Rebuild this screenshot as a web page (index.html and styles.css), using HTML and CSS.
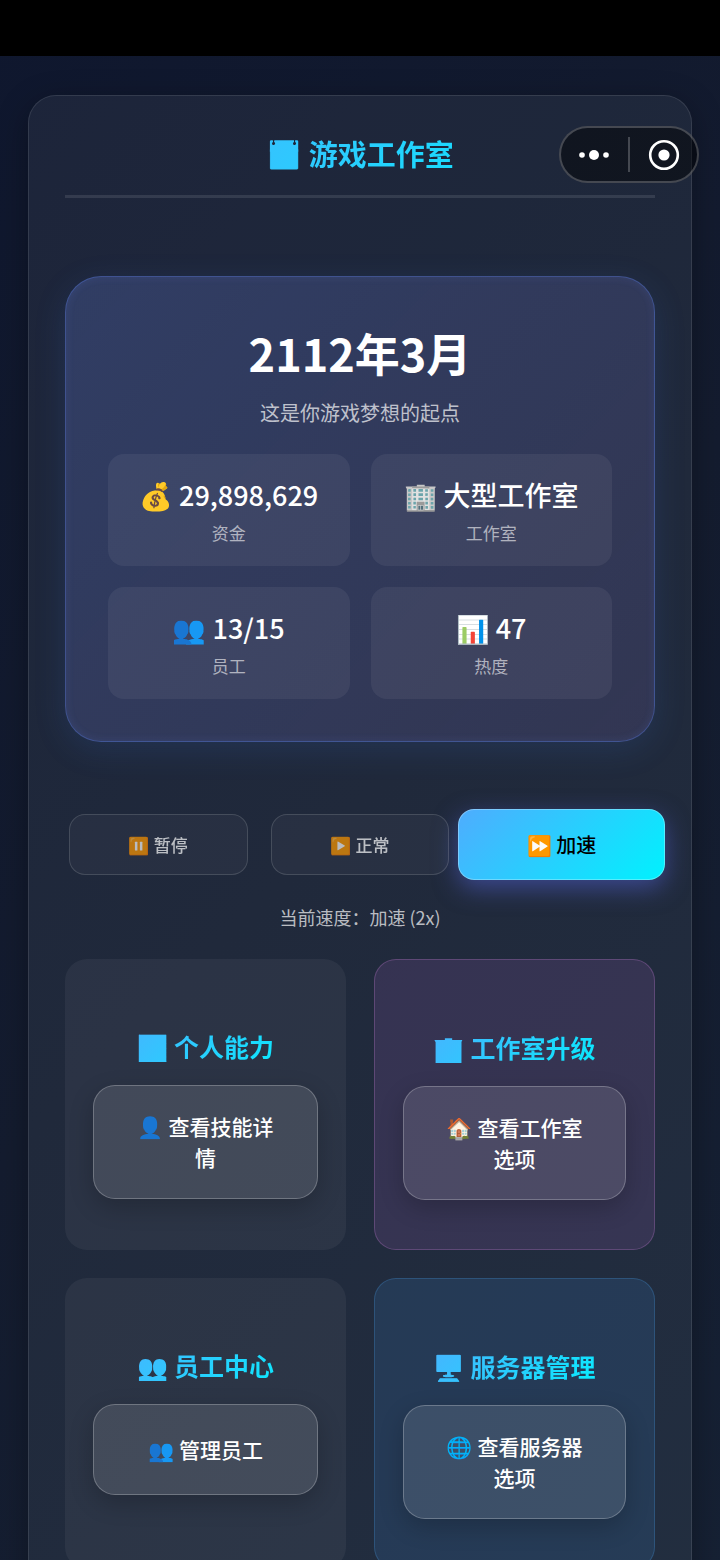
FILE: index.html
```html
<!DOCTYPE html>
<html lang="zh-CN">
<head>
  <meta charset="UTF-8">
  <meta name="viewport" content="width=device-width, initial-scale=1.0">
  <title>游戏工作室</title>
  <link rel="stylesheet" href="styles.css">
</head>

<body>

  <div class="status-bar"></div>

  <div class="capsule">
    <button class="capsule-btn" aria-label="更多">
      <svg width="32" height="12" viewBox="0 0 32 12">
        <circle cx="3" cy="6" r="2.8"/>
        <circle cx="15" cy="6" r="5"/>
        <circle cx="27" cy="6" r="2.8"/>
      </svg>
    </button>
    <span class="capsule-line"></span>
    <button class="capsule-btn" aria-label="关闭">
      <svg width="32" height="32" viewBox="0 0 32 32">
        <circle cx="16" cy="16" r="13.8" fill="none" stroke="#fff" stroke-width="2.6"/>
        <circle cx="16" cy="16" r="5.6"/>
      </svg>
    </button>
  </div>

  <main class="container">
    <header class="header">
      <h1 class="gradient-text">📅 游戏工作室</h1>
    </header>

    <section class="hero">
      <h2 class="date">2112年3月</h2>
      <p class="subtitle">这是你游戏梦想的起点</p>
      <div class="stats">
        <div class="stat">
          <div class="stat-value">💰 29,898,629</div>
          <div class="stat-label">资金</div>
        </div>
        <div class="stat">
          <div class="stat-value">🏢 大型工作室</div>
          <div class="stat-label">工作室</div>
        </div>
        <div class="stat">
          <div class="stat-value">👥 13/15</div>
          <div class="stat-label">员工</div>
        </div>
        <div class="stat">
          <div class="stat-value">📊 47</div>
          <div class="stat-label">热度</div>
        </div>
      </div>
    </section>

    <div class="speed">
      <button class="speed-btn">⏸️ 暂停</button>
      <button class="speed-btn">▶️ 正常</button>
      <button class="speed-btn active">⏩ 加速</button>
    </div>
    <p class="speed-text">当前速度：加速 (2x)</p>

    <div class="cards">
      <section class="card">
        <h3 class="gradient-text">📊 个人能力</h3>
        <button class="card-btn">👤 查看技能详情</button>
      </section>
      <section class="card card-studio">
        <h3 class="gradient-text">🏢 工作室升级</h3>
        <button class="card-btn">🏠 查看工作室选项</button>
      </section>
      <section class="card">
        <h3 class="gradient-text">👥 员工中心</h3>
        <button class="card-btn">👥 管理员工</button>
      </section>
      <section class="card card-server">
        <h3 class="gradient-text">🖥️ 服务器管理</h3>
        <button class="card-btn">🌐 查看服务器选项</button>
      </section>
    </div>
  </main>

</body>
</html>
```
FILE: styles.css
```css
* {
  box-sizing: border-box;
  margin: 0;
  padding: 0;
}
body {
  min-height: 100vh;
  background: linear-gradient(135deg, #0f172e 0%, #141c2f 50%, #162134 100%);
  color: #fff;
  font-family: "Noto Sans CJK SC", "Noto Color Emoji", sans-serif;
}
button {
  font-family: inherit;
  color: inherit;
  cursor: pointer;
}
.status-bar {
  height: 56px;
  background: #000;
}

/* mini program capsule */
.capsule {
  position: absolute;
  top: 126px;
  right: 21px;
  z-index: 10;
  display: flex;
  align-items: center;
  width: 140px;
  height: 57px;
  border: 2px solid rgba(255, 255, 255, 0.22);
  border-radius: 29px;
  background: rgba(0, 0, 0, 0.45);
}
.capsule-btn {
  flex: 1;
  display: flex;
  align-items: center;
  justify-content: center;
  height: 100%;
  border: none;
  background: none;
}
.capsule-btn svg {
  fill: #fff;
}
.capsule-line {
  width: 2px;
  height: 35px;
  background: rgba(255, 255, 255, 0.22);
}

.container {
  margin: 39px 28px 0;
  padding: 36px;
  border: 1px solid rgba(255, 255, 255, 0.1);
  border-radius: 28px;
  background: rgba(230, 255, 250, 0.06);
  box-shadow: 0 8px 32px rgba(0, 0, 0, 0.3);
}
.gradient-text {
  background: linear-gradient(135deg, #4facfe 0%, #00f2fe 100%);
  -webkit-background-clip: text;
  background-clip: text;
  -webkit-text-fill-color: transparent;
}
.header {
  margin-bottom: 78px;
  padding-bottom: 21px;
  border-bottom: 3px solid rgba(255, 255, 255, 0.1);
  text-align: center;
}
.header h1 {
  font-size: 29px;
  line-height: 42px;
}

/* date and studio stats */
.hero {
  padding: 42px;
  border: 1px solid rgba(79, 110, 200, 0.5);
  border-radius: 36px;
  background: linear-gradient(135deg, rgba(100, 125, 210, 0.28), rgba(105, 92, 150, 0.25));
  box-shadow: 0 8px 32px rgba(60, 120, 220, 0.15), inset 0 0 8px rgba(102, 126, 234, 0.15);
  text-align: center;
}
.date {
  font-size: 45px;
  line-height: 68px;
}
.subtitle {
  margin: 11px 0 26px;
  color: rgba(255, 255, 255, 0.7);
  font-size: 20px;
  line-height: 30px;
}
.stats {
  display: grid;
  grid-template-columns: 1fr 1fr;
  gap: 21px;
}
.stat {
  padding: 20px 12px 21px;
  border-radius: 16px;
  background: rgba(255, 255, 255, 0.06);
}
.stat-value {
  margin-bottom: 4px;
  font-size: 27px;
  font-weight: 500;
  line-height: 42px;
}
.stat-label {
  color: rgba(255, 255, 255, 0.6);
  font-size: 17px;
  line-height: 25px;
}

/* game speed */
.speed {
  display: grid;
  grid-template-columns: repeat(3, 1fr);
  align-items: center;
  gap: 15px;
  margin-top: 67px;
}
.speed-btn {
  height: 61px;
  margin: 0 4px;
  border: 1px solid rgba(255, 255, 255, 0.2);
  border-radius: 16px;
  background: rgba(255, 255, 255, 0.05);
  font-size: 17px;
  font-weight: 500;
  opacity: 0.7;
}
.speed-btn.active {
  height: 71px;
  margin: 0 -10px;
  border-color: rgba(255, 255, 255, 0.3);
  background: linear-gradient(135deg, #4facfe 0%, #00f2fe 100%) border-box;
  box-shadow: 0 8px 25px rgba(79, 93, 200, 0.6);
  color: #000;
  font-size: 20px;
  opacity: 1;
}
.speed-text {
  margin: 23px 0 28px;
  color: rgba(255, 255, 255, 0.7);
  font-size: 18px;
  line-height: 28px;
  text-align: center;
}

/* feature cards */
.cards {
  display: grid;
  grid-template-columns: 1fr 1fr;
  grid-auto-rows: 291px;
  gap: 28px;
}
.card {
  padding: 71px 28px;
  border-radius: 22px;
  background: rgba(255, 255, 255, 0.05);
  text-align: center;
}
.card-studio {
  border: 1px solid rgba(240, 147, 251, 0.22);
  background: rgba(140, 90, 170, 0.2);
}
.card-server {
  border: 1px solid rgba(79, 172, 254, 0.22);
  background: rgba(65, 135, 210, 0.16);
}
.card h3 {
  margin-bottom: 23px;
  font-size: 25px;
  line-height: 32px;
}
.card-btn {
  width: 100%;
  min-height: 91px;
  padding: 25px 40px;
  border: 1px solid rgba(255, 255, 255, 0.24);
  border-radius: 22px;
  background: rgba(255, 255, 255, 0.11);
  box-shadow: 0 8px 24px rgba(0, 0, 0, 0.2);
  font-size: 21px;
  font-weight: 500;
  line-height: 31px;
}
```
